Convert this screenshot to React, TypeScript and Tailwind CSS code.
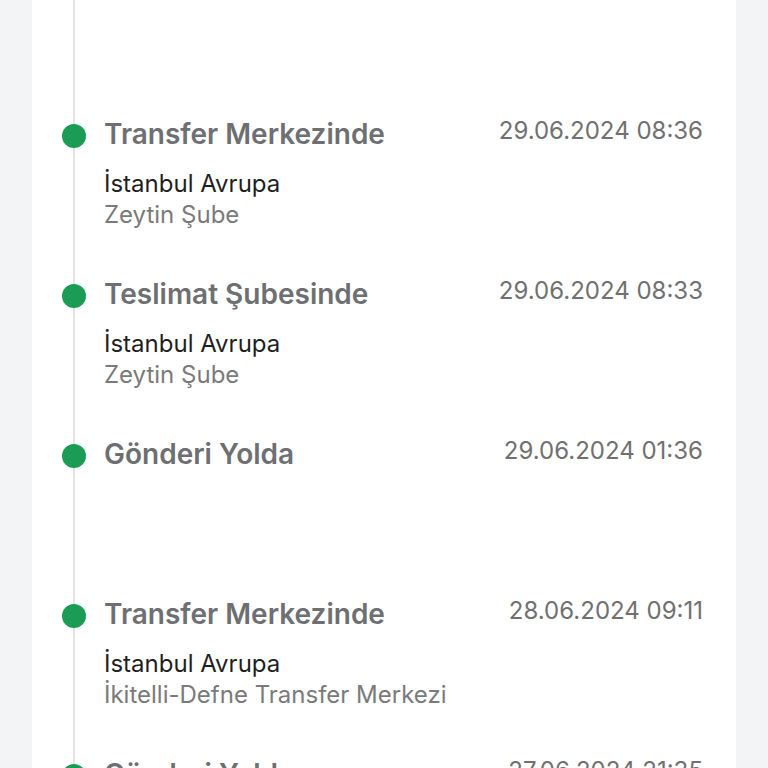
import React from 'react';

type Olay = {
  baslik: string;
  tarih: string;
  il?: string;
  sube?: string;
};

const olaylar: Olay[] = [
  { baslik: 'Transfer Merkezinde', tarih: '29.06.2024 08:36', il: 'İstanbul Avrupa', sube: 'Zeytin Şube' },
  { baslik: 'Teslimat Şubesinde', tarih: '29.06.2024 08:33', il: 'İstanbul Avrupa', sube: 'Zeytin Şube' },
  { baslik: 'Gönderi Yolda', tarih: '29.06.2024 01:36' },
  { baslik: 'Transfer Merkezinde', tarih: '28.06.2024 09:11', il: 'İstanbul Avrupa', sube: 'İkitelli-Defne Transfer Merkezi' },
  { baslik: 'Gönderi Yolda', tarih: '27.06.2024 21:35' },
];

export default function App() {
  return (
    <div className="h-[768px] overflow-hidden bg-[#f3f4f6] px-[32px] font-['Inter','Noto_Sans',sans-serif]">
      <div className="h-full bg-white pr-[33px]">
        <div className="ml-[41px] h-full border-l-2 border-[#e4e4e4] pt-[116px]">
          {olaylar.map((olay, i) => (
            <div key={i} className="flex h-[160px] items-start">
              <div className="-ml-[13px] mt-[8px] h-[24px] w-[24px] shrink-0 rounded-full bg-[#1a9c56]" />
              <div className="ml-[18px] flex-1">
                <div className="flex items-start justify-between">
                  <span className="text-[28px] leading-[36px] font-semibold text-[#6d6f72]">{olay.baslik}</span>
                  <span className="text-[24px] leading-[30px] text-[#707070]">{olay.tarih}</span>
                </div>
                {olay.il && (
                  <div className="mt-[16px] text-[24px] leading-[31px]">
                    <div className="text-[#1f1f1f]">{olay.il}</div>
                    <div className="text-[#7a7a7a]">{olay.sube}</div>
                  </div>
                )}
              </div>
            </div>
          ))}
        </div>
      </div>
    </div>
  );
}
